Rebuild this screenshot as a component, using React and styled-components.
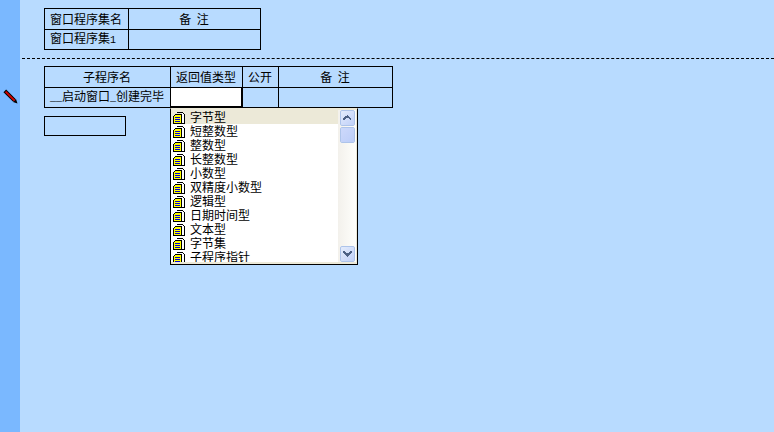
import React from "react";
import styled, { createGlobalStyle } from "styled-components";

const Global = createGlobalStyle`
  html, body { margin: 0; padding: 0; width: 774px; height: 432px; overflow: hidden; }
  body { font: 12px/14px "Noto Sans CJK SC", "Liberation Sans", sans-serif; color: #000; background: #b8dbff; }
`;

const Page = styled.div`
  display: flex;
  width: 774px;
  height: 432px;
  background: #b8dbff;
`;
const Gutter = styled.div`
  width: 20px;
  flex: none;
  background: #7ab8ff;
  padding-top: 89px;
  box-sizing: border-box;
  padding-left: 3px;
`;
const Editor = styled.div`
  flex: 1;
  padding-top: 8px;
  min-width: 0;
`;
const Indented = styled.div`
  margin-left: 24px;
  position: relative;
  width: fit-content;
`;
const Grid = styled.div`
  display: grid;
  grid-template-columns: ${(p) => p.$cols};
  grid-auto-rows: ${(p) => p.$rows};
  border-top: 1px solid #000;
  border-left: 1px solid #000;
`;
const Cell = styled.div`
  border-right: 1px solid #000;
  border-bottom: 1px solid #000;
  display: flex;
  align-items: center;
  justify-content: ${(p) => (p.$left ? "flex-start" : "center")};
  padding-left: ${(p) => (p.$left ? "5px" : "0")};
  padding-right: ${(p) => (p.$left ? "0" : "1px")};
  white-space: pre;
  overflow: hidden;
  box-sizing: border-box;
`;
const EditCell = styled(Cell)`
  background: #fff;
  border-right-width: 2px;
  border-bottom-width: 2px;
`;
const Ascii = styled.span`
  font: 10px/14px "Liberation Mono", monospace;
`;
const Divider = styled.div`
  margin: 8px 0 7px 2px;
  height: 0;
  border-top: 1px dashed #000;
`;
const CodeBox = styled.div`
  width: 80px;
  height: 18px;
  margin-top: 8px;
  border: 1px solid #000;
`;
const Dropdown = styled.div`
  position: absolute;
  left: 126px;
  top: 42px;
  width: 188px;
  height: 157px;
  box-sizing: border-box;
  display: flex;
  background: #ece9d8;
  border: 1px solid #000;
  border-top-color: #ece9d8;
  padding: 1px 1px 2px 0;
`;
const List = styled.div`
  flex: 1;
  background: #fff;
  overflow: hidden;
  min-width: 0;
`;
const Item = styled.div`
  height: 14px;
  display: flex;
  align-items: center;
  gap: 5px;
  padding-left: 2px;
  white-space: nowrap;
  background: ${(p) => (p.$active ? "#ece9d8" : "transparent")};
`;
const ScrollBar = styled.div`
  width: 18px;
  flex: none;
  background: linear-gradient(90deg, #f3f1ec, #fefefb);
  display: flex;
  flex-direction: column;
  align-items: center;
  gap: 1px;
`;
const ScrollButton = styled.div`
  width: 15px;
  height: 16px;
  box-sizing: border-box;
  border: 1px solid #f4f8fe;
  outline: 1px solid #aec4ea;
  outline-offset: -1px;
  border-radius: 2px;
  background: linear-gradient(135deg, #e4ecfc, #c0d0f8);
  display: flex;
  align-items: center;
  justify-content: center;
`;
const Thumb = styled(ScrollButton)`
  background: linear-gradient(135deg, #cdd9fb, #bccdf8);
  margin-bottom: auto;
`;
const DocGlyph = styled.svg`
  flex: none;
  display: block;
  margin-top: 2px;
`;
const PenGlyph = styled.svg`
  display: block;
`;

const DocIcon = () => (
  <DocGlyph width="12" height="12" viewBox="0 0 12 12" shapeRendering="crispEdges">
    <path d="M9 1h1v1h1v9H9z" fill="#fff" />
    <path d="M4 0h6v1h1v1h1v10H9v-1h2V2h-1V1H4z" fill="#000" />
    <path d="M2 2h7v10H0V4h1V3h1z" fill="#000" />
    <path d="M2 3h6v8H1V4h1z" fill="#ff0" />
    <path d="M2 5h5v1H2zM2 7h5v1H2zM2 9h5v1H2z" fill="#0000d8" />
  </DocGlyph>
);

const Pen = () => (
  <PenGlyph width="15" height="15" viewBox="0 0 15 15">
    <path d="M1.8 1.8 L11.5 11.5" stroke="#000" strokeWidth="3.8" />
    <path d="M10 13 L13 10 L14.5 14.5 Z" fill="#000" />
    <path d="M2.6 2.6 L11.6 11.6" stroke="#d80000" strokeWidth="1.8" />
  </PenGlyph>
);

const Chevron = ({ up }) => (
  <svg width="9" height="6" viewBox="0 0 9 6" shapeRendering="crispEdges">
    <path
      d={up ? "M4 0h1v1h1v1h1v1h1v2H7V4H6V3H3v1H2v1H0V3h1V2h1V1h2z" : "M0 0h2v1h1v1h3V1h1V0h2v2H8v1H7v1H6v1H5v1H4V5H3V4H2V3H1V2H0z"}
      fill="#4d6185"
    />
  </svg>
);

const types = ["字节型", "短整数型", "整数型", "长整数型", "小数型", "双精度小数型", "逻辑型", "日期时间型", "文本型", "字节集", "子程序指针"];

export default function App() {
  return (
    <Page>
      <Global />
      <Gutter>
        <Pen />
      </Gutter>
      <Editor>
        <Indented>
          <Grid $cols="84px 132px" $rows="21px 20px">
            <Cell>窗口程序集名</Cell>
            <Cell>备  注</Cell>
            <Cell $left>
              <span>窗口程序集<Ascii>1</Ascii></span>
            </Cell>
            <Cell />
          </Grid>
        </Indented>
        <Divider />
        <Indented>
          <Grid $cols="126px 72px 36px 114px" $rows="21px 20px">
            <Cell>子程序名</Cell>
            <Cell>返回值类型</Cell>
            <Cell>公开</Cell>
            <Cell>备  注</Cell>
            <Cell $left>
              <span><Ascii>__</Ascii>启动窗口<Ascii>_</Ascii>创建完毕</span>
            </Cell>
            <EditCell />
            <Cell />
            <Cell />
          </Grid>
          <CodeBox />
          <Dropdown>
            <List>
              {types.map((t, i) => (
                <Item key={t} $active={i === 0}>
                  <DocIcon />
                  {t}
                </Item>
              ))}
            </List>
            <ScrollBar>
              <ScrollButton>
                <Chevron up />
              </ScrollButton>
              <Thumb />
              <ScrollButton>
                <Chevron />
              </ScrollButton>
            </ScrollBar>
          </Dropdown>
        </Indented>
      </Editor>
    </Page>
  );
}
